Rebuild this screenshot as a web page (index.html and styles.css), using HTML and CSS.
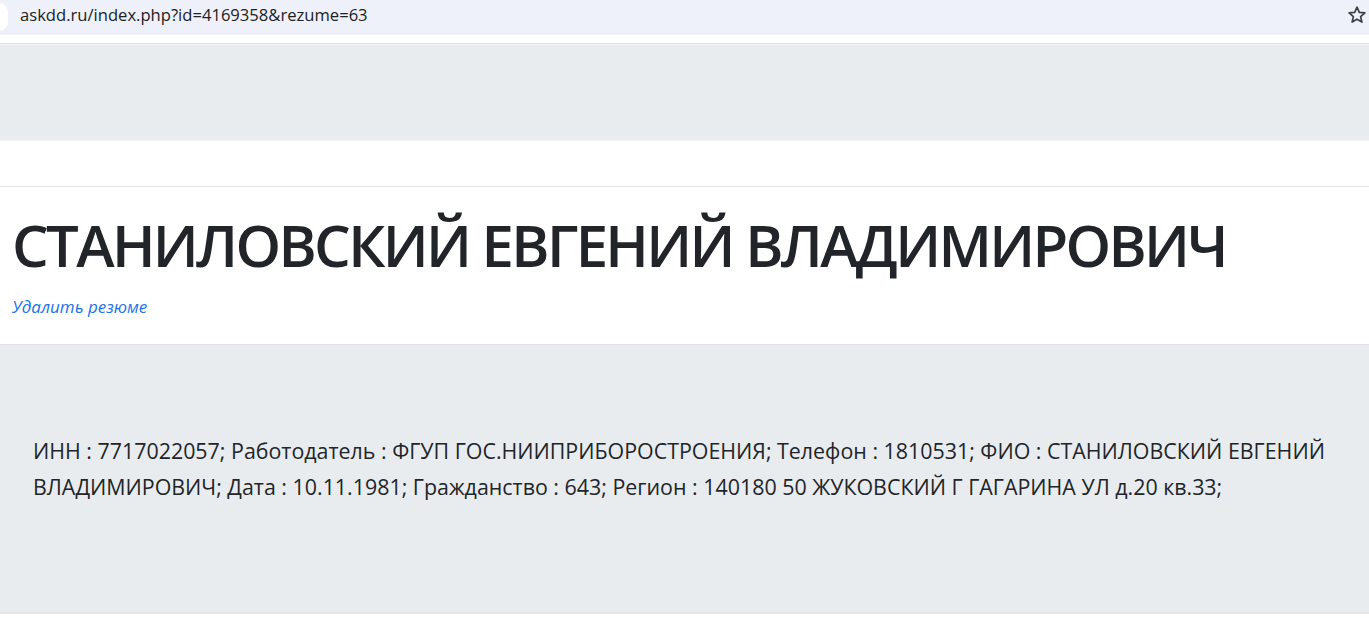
FILE: index.html
```html
<!DOCTYPE html>
<html lang="ru">
<head>
<meta charset="utf-8">
<title>askdd.ru</title>
<link rel="stylesheet" href="styles.css">
</head>
<body>
<div class="browserbar">
  <div class="pill"></div>
  <div class="url">askdd.ru/index.php?id=4169358&amp;rezume=63</div>
  <svg class="star" width="20" height="20" viewBox="0 0 20 20"><path d="M10 2.2l2.3 5.2 5.6.5-4.3 3.7 1.3 5.5L10 14.2l-4.9 2.9 1.3-5.5L2.1 7.9l5.6-.5z" fill="none" stroke="#3c4043" stroke-width="1.7" stroke-linejoin="round"/></svg>
</div>
<div class="gap-white"></div>
<div class="band-top"></div>
<div class="spacer"></div>
<header class="title-block">
  <h1 class="name">СТАНИЛОВСКИЙ ЕВГЕНИЙ ВЛАДИМИРОВИЧ</h1>
  <a class="delete" href="#">Удалить резюме</a>
</header>
<section class="info">
  <p class="info-text">ИНН : 7717022057; Работодатель : ФГУП ГОС.НИИПРИБОРОСТРОЕНИЯ; Телефон : 1810531; ФИО : СТАНИЛОВСКИЙ ЕВГЕНИЙ ВЛАДИМИРОВИЧ; Дата : 10.11.1981; Гражданство : 643; Регион : 140180 50 ЖУКОВСКИЙ Г ГАГАРИНА УЛ д.20 кв.33;</p>
</section>
</body>
</html>
```
FILE: styles.css
```css
html, body {
  margin: 0;
  padding: 0;
  background: #ffffff;
  font-family: "Open Sans", "Noto Sans", sans-serif;
  color: #212529;
}
.browserbar {
  height: 35px;
  background: #eef1f9;
  display: flex;
  align-items: center;
  position: relative;
}
.pill {
  position: absolute;
  left: -10px;
  top: 3px;
  width: 18px;
  height: 28px;
  background: #ffffff;
  border-radius: 14px;
}
.url {
  margin-left: 20px;
  font-size: 16.6px;
  color: #202124;
  flex: 1;
  padding-bottom: 6px;
}
.star {
  margin-right: 2px;
  margin-bottom: 5px;
}
.gap-white {
  height: 8px;
  background: #ffffff;
}
.band-top {
  height: 97px;
  background: #e9ecef;
  border-top: 1px solid #dcdfe3;
  box-shadow: inset 0 1px 0 #f3f4f6, inset 0 -1px 0 #f0f2f4;
}
.spacer {
  height: 45px;
  background: #ffffff;
  border-bottom: 1px solid #dee2e6;
}
.title-block {
  padding: 0 12px;
  height: 158px;
  border-bottom: 1px solid #dee2e6;
  box-sizing: border-box;
}
.name {
  margin: 0;
  padding-top: 22px;
  font-size: 58px;
  font-weight: 550;
  line-height: 72px;
  letter-spacing: -2.65px;
  color: #212529;
}
.delete {
  display: block;
  margin-top: 14px;
  font-size: 17px;
  font-style: italic;
  color: #1a73e8;
  text-decoration: none;
}
.info {
  background: #e9ecef;
  height: 269px;
  padding: 0 33px 20px;
  box-sizing: border-box;
  border-bottom: 2px solid #e2e5e9;
  display: flex;
  align-items: center;
}
.info-text {
  margin: 0;
  font-size: 21.4px;
  line-height: 36px;
  color: #212529;
}
```
